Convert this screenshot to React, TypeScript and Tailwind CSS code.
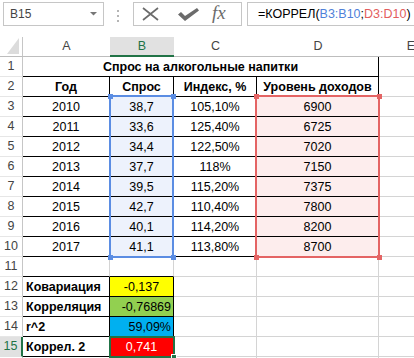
import React from 'react';

const years = [
  ['2010', '38,7', '105,10%', '6900'],
  ['2011', '33,6', '125,40%', '6725'],
  ['2012', '34,4', '122,50%', '7020'],
  ['2013', '37,7', '118%', '7150'],
  ['2014', '39,5', '115,20%', '7375'],
  ['2015', '42,7', '110,40%', '7800'],
  ['2016', '40,1', '114,20%', '8200'],
  ['2017', '41,1', '113,80%', '8700'],
];

function Cell({
  children,
  r = false,
  b = false,
  className = '',
}: {
  children?: React.ReactNode;
  r?: boolean;
  b?: boolean;
  className?: string;
}) {
  return (
    <div
      className={`flex items-center pt-[1px] whitespace-nowrap overflow-visible border-r border-b ${
        r ? 'border-r-black' : 'border-r-[#d4d4d4]'
      } ${b ? 'border-b-black' : 'border-b-[#d4d4d4]'} ${className}`}
    >
      {children}
    </div>
  );
}

function RowHead({ n, active = false }: { n?: number; active?: boolean }) {
  return active ? (
    <div className="flex items-center justify-center border-b border-b-[#e1e1e1] border-r-2 border-r-[#217346] bg-[#e1e1e1] text-[#217346]">
      {n}
    </div>
  ) : (
    <div className="flex items-center justify-center border-r border-b border-r-[#c6c6c6] border-b-[#e6e6e6] text-[#444]">
      {n}
    </div>
  );
}

function Corner({ color, x, y }: { color: string; x: number; y: number }) {
  return (
    <div
      className="absolute w-[5px] h-[5px]"
      style={{ left: x - 2, top: y - 2, background: color }}
    />
  );
}

function FormulaBar() {
  return (
    <div className="flex items-start h-[37px] pt-[2px] pl-[3px] bg-white">
      <div className="flex shrink-0 items-center justify-between w-[101px] h-[24px] border border-[#c6c6c6] pl-[6px] pr-[6px] text-[12px] text-[#444]">
        <span>B15</span>
        <svg width="7" height="4" viewBox="0 0 7 4">
          <polygon points="0,0 7,0 3.5,3.5" fill="#777" />
        </svg>
      </div>
      <div className="flex shrink-0 flex-col gap-[3px] ml-[13px] mt-[8px]">
        <div className="w-[2px] h-[2px] bg-[#b5b5b5]" />
        <div className="w-[2px] h-[2px] bg-[#b5b5b5]" />
        <div className="w-[2px] h-[2px] bg-[#b5b5b5]" />
      </div>
      <div className="flex shrink-0 items-center w-[109px] h-[24px] ml-[14px] border border-[#c6c6c6]">
        <svg className="ml-[8px]" width="17" height="14" viewBox="0 0 17 14">
          <path d="M1 1 L16 13 M16 1 L1 13" stroke="#6b6b6b" strokeWidth="1.7" fill="none" />
        </svg>
        <svg className="ml-[19px]" width="21" height="13" viewBox="0 0 21 13">
          <polygon points="0,6.5 3,4 7,8 19,0 21,2.5 7,13" fill="#6b6b6b" />
        </svg>
        <span className="ml-[13px] -mt-[3px] font-['Liberation_Serif',serif] italic text-[19px] text-[#6b6b6b] leading-none">
          fx
        </span>
      </div>
      <div className="flex shrink-0 items-center w-[200px] h-[24px] ml-[5px] border border-[#c6c6c6] pl-[10px] text-[12.5px] text-black whitespace-nowrap">
        <span>=КОРРЕЛ(</span>
        <span className="text-[#4f81d9]">B3:B10</span>
        <span>;</span>
        <span className="text-[#e35d5d]">D3:D10</span>
        <span>)</span>
      </div>
    </div>
  );
}

export default function App() {
  const colHead = 'flex items-center justify-center border-b border-b-[#bdbdbd] text-[#444]';
  return (
    <div className="w-[414px] h-[358px] overflow-hidden bg-white font-['Liberation_Sans',Arial,sans-serif] text-[12.5px] text-black">
      <FormulaBar />
      <div className="relative grid grid-cols-[23px_87px_64px_83px_122px_64px] auto-rows-[20px]">
        {/* column headers */}
        <div className="relative border-r border-b border-r-[#c6c6c6] border-b-[#bdbdbd]">
          <svg className="absolute left-[7px] top-[1px]" width="12" height="16" viewBox="0 0 12 16">
            <polygon points="12,0 12,16 0,16" fill="#dcdcdc" />
          </svg>
        </div>
        <div className={colHead}>A</div>
        <div className="flex items-center justify-center border-b-2 border-b-[#217346] bg-[#e1e1e1] text-[#217346]">
          B
        </div>
        <div className={colHead}>C</div>
        <div className={colHead}>D</div>
        <div className={colHead}>E</div>

        {/* row 1 */}
        <RowHead n={1} />
        <Cell r b className="col-span-4 justify-center font-bold">
          Спрос на алкогольные напитки
        </Cell>
        <Cell />

        {/* row 2 */}
        <RowHead n={2} />
        <Cell r b className="justify-center font-bold">Год</Cell>
        <Cell r b className="justify-center font-bold">Спрос</Cell>
        <Cell r b className="justify-center font-bold">Индекс, %</Cell>
        <Cell r b className="justify-center font-bold">Уровень доходов</Cell>
        <Cell />

        {years.map((row, i) => (
          <React.Fragment key={row[0]}>
            <RowHead n={i + 3} />
            <Cell r b className="justify-center">{row[0]}</Cell>
            <Cell r b className="justify-center bg-[#edf2fc]">{row[1]}</Cell>
            <Cell r b className="justify-center">{row[2]}</Cell>
            <Cell r b className="justify-center bg-[#fdeded]">{row[3]}</Cell>
            <Cell />
          </React.Fragment>
        ))}

        {/* row 11 */}
        <RowHead n={11} />
        <Cell b />
        <Cell b />
        <Cell />
        <Cell />
        <Cell />

        {/* stats */}
        <RowHead n={12} />
        <Cell r b className="pl-[3px] font-bold">Ковариация</Cell>
        <Cell r b className="justify-center bg-[#ffff00]">-0,137</Cell>
        <Cell />
        <Cell />
        <Cell />

        <RowHead n={13} />
        <Cell r b className="pl-[3px] font-bold">Корреляция</Cell>
        <Cell r b className="justify-end pr-[2px] bg-[#92d050]">-0,76869</Cell>
        <Cell />
        <Cell />
        <Cell />

        <RowHead n={14} />
        <Cell r b className="pl-[3px] font-bold">r^2</Cell>
        <Cell r b className="justify-end pr-[2px] bg-[#00b0f0]">59,09%</Cell>
        <Cell />
        <Cell />
        <Cell />

        <RowHead n={15} active />
        <Cell r b className="pl-[3px] font-bold">Коррел. 2</Cell>
        <Cell r b className="justify-center bg-[#ff0000] text-white">0,741</Cell>
        <Cell />
        <Cell />
        <Cell />

        <RowHead />
        <Cell />
        <Cell />
        <Cell />
        <Cell />
        <Cell />

        {/* reference highlights */}
        <div className="absolute left-[109px] top-[58px] w-[65px] h-[163px] border-2 border-[#5b8de3] pointer-events-none" />
        <Corner color="#5b8de3" x={110} y={59} />
        <Corner color="#5b8de3" x={173} y={59} />
        <Corner color="#5b8de3" x={110} y={220} />
        <Corner color="#5b8de3" x={173} y={220} />

        <div className="absolute left-[255px] top-[58px] w-[125px] h-[163px] border-2 border-[#e46464] pointer-events-none" />
        <Corner color="#e46464" x={256} y={59} />
        <Corner color="#e46464" x={379} y={59} />
        <Corner color="#e46464" x={256} y={220} />
        <Corner color="#e46464" x={379} y={220} />

        {/* active cell */}
        <div className="absolute left-[109px] top-[299px] w-[66px] h-[22px] border-2 border-[#217346] pointer-events-none" />
        <div className="absolute left-[171px] top-[317px] w-[6px] h-[6px] bg-[#217346] border border-white" />
      </div>
    </div>
  );
}
